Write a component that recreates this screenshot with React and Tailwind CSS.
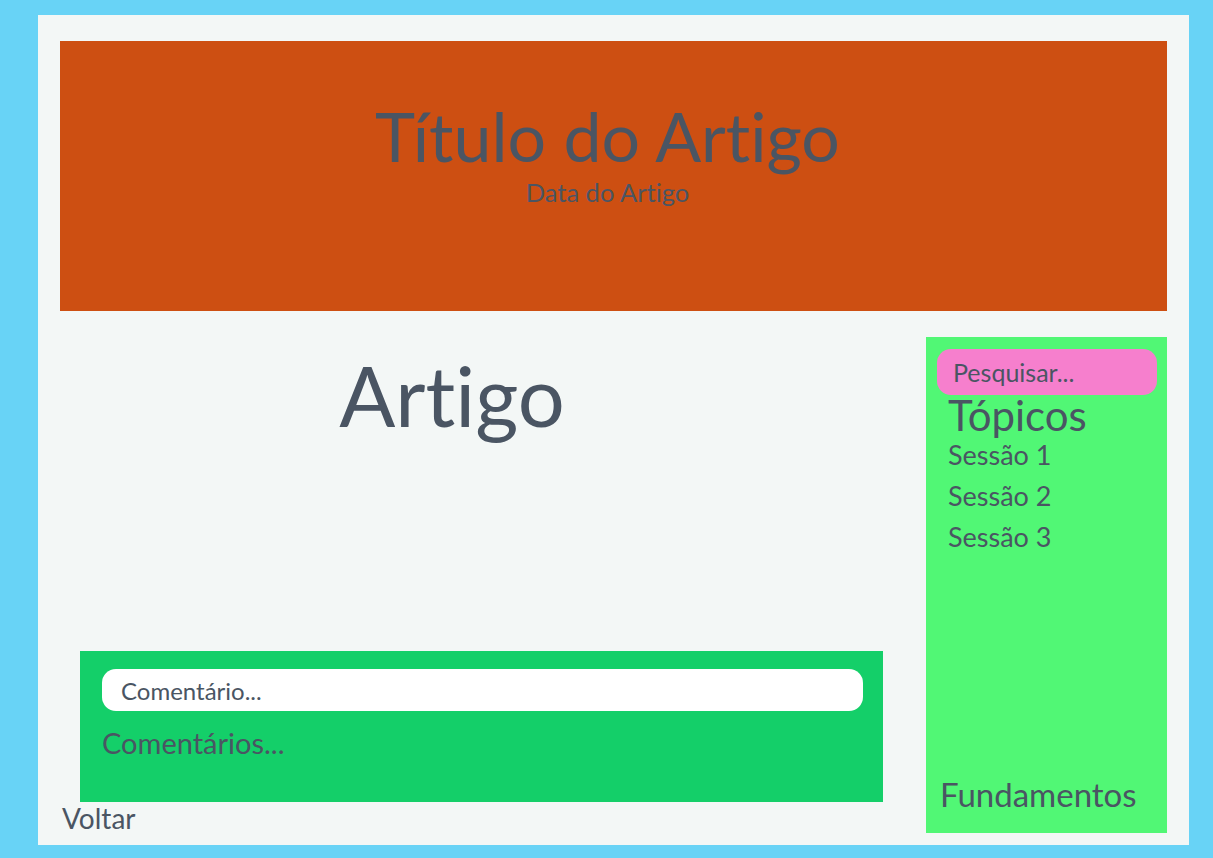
export default function App() {
    return (
        <div className="min-h-screen bg-[#68d3f6] pl-[38px] pr-[24px] pt-[15px] pb-[13px] font-['Lato',sans-serif] text-[#4a5563] [font-variant-ligatures:none]">
            <div className="bg-[#f3f7f6] h-[830px] px-[22px] pt-[26px] pb-[12px] flex flex-col">
                <header className="h-[270px] shrink-0 bg-[#cd4f12] flex flex-col items-center pt-[54px] pr-[12px]">
                    <h1 className="text-[68px] leading-[1.2]">Título do Artigo</h1>
                    <p className="text-[25.5px] leading-[1.2]">Data do Artigo</p>
                </header>

                <div className="flex flex-1 mt-[26px] gap-[43px]">
                    <main className="flex-1 flex flex-col">
                        <h2 className="w-[784px] text-center text-[83px] leading-[1.2] mt-[9px]">Artigo</h2>
                        <div className="flex-1" />
                        <section className="ml-[20px] w-[803px] h-[151px] shrink-0 bg-[#14cf69] pt-[18px] pl-[22px] pr-[20px]">
                            <input
                                placeholder="Comentário..."
                                className="w-full h-[42px] bg-white rounded-[14px] px-[19px] text-[24px] outline-none placeholder:text-[#4a5563]"
                            />
                            <p className="text-[29px] leading-[1.2] mt-[15px]">Comentários...</p>
                        </section>
                        <a href="#" className="ml-[2px] text-[28px] leading-[29px] mt-[2px]">Voltar</a>
                    </main>

                    <aside className="w-[241px] shrink-0 bg-[#51f775] flex flex-col px-[11px] pt-[12px] pb-[18px]">
                        <input
                            placeholder="Pesquisar..."
                            className="w-[220px] h-[46px] bg-[#f67fcd] rounded-[14px] px-[16px] text-[25px] outline-none placeholder:text-[#4a5563]"
                        />
                        <h3 className="text-[42px] leading-[1.2] ml-[11px] -mt-[5px]">Tópicos</h3>
                        <ul className="ml-[11px] flex flex-col gap-[8.5px] text-[27px] leading-[1.2] -mt-[1px]">
                            <li>Sessão 1</li>
                            <li>Sessão 2</li>
                            <li>Sessão 3</li>
                        </ul>
                        <div className="flex-1" />
                        <p className="text-[33px] leading-[1.2] ml-[3px]">Fundamentos</p>
                    </aside>
                </div>
            </div>
        </div>
    )
}
